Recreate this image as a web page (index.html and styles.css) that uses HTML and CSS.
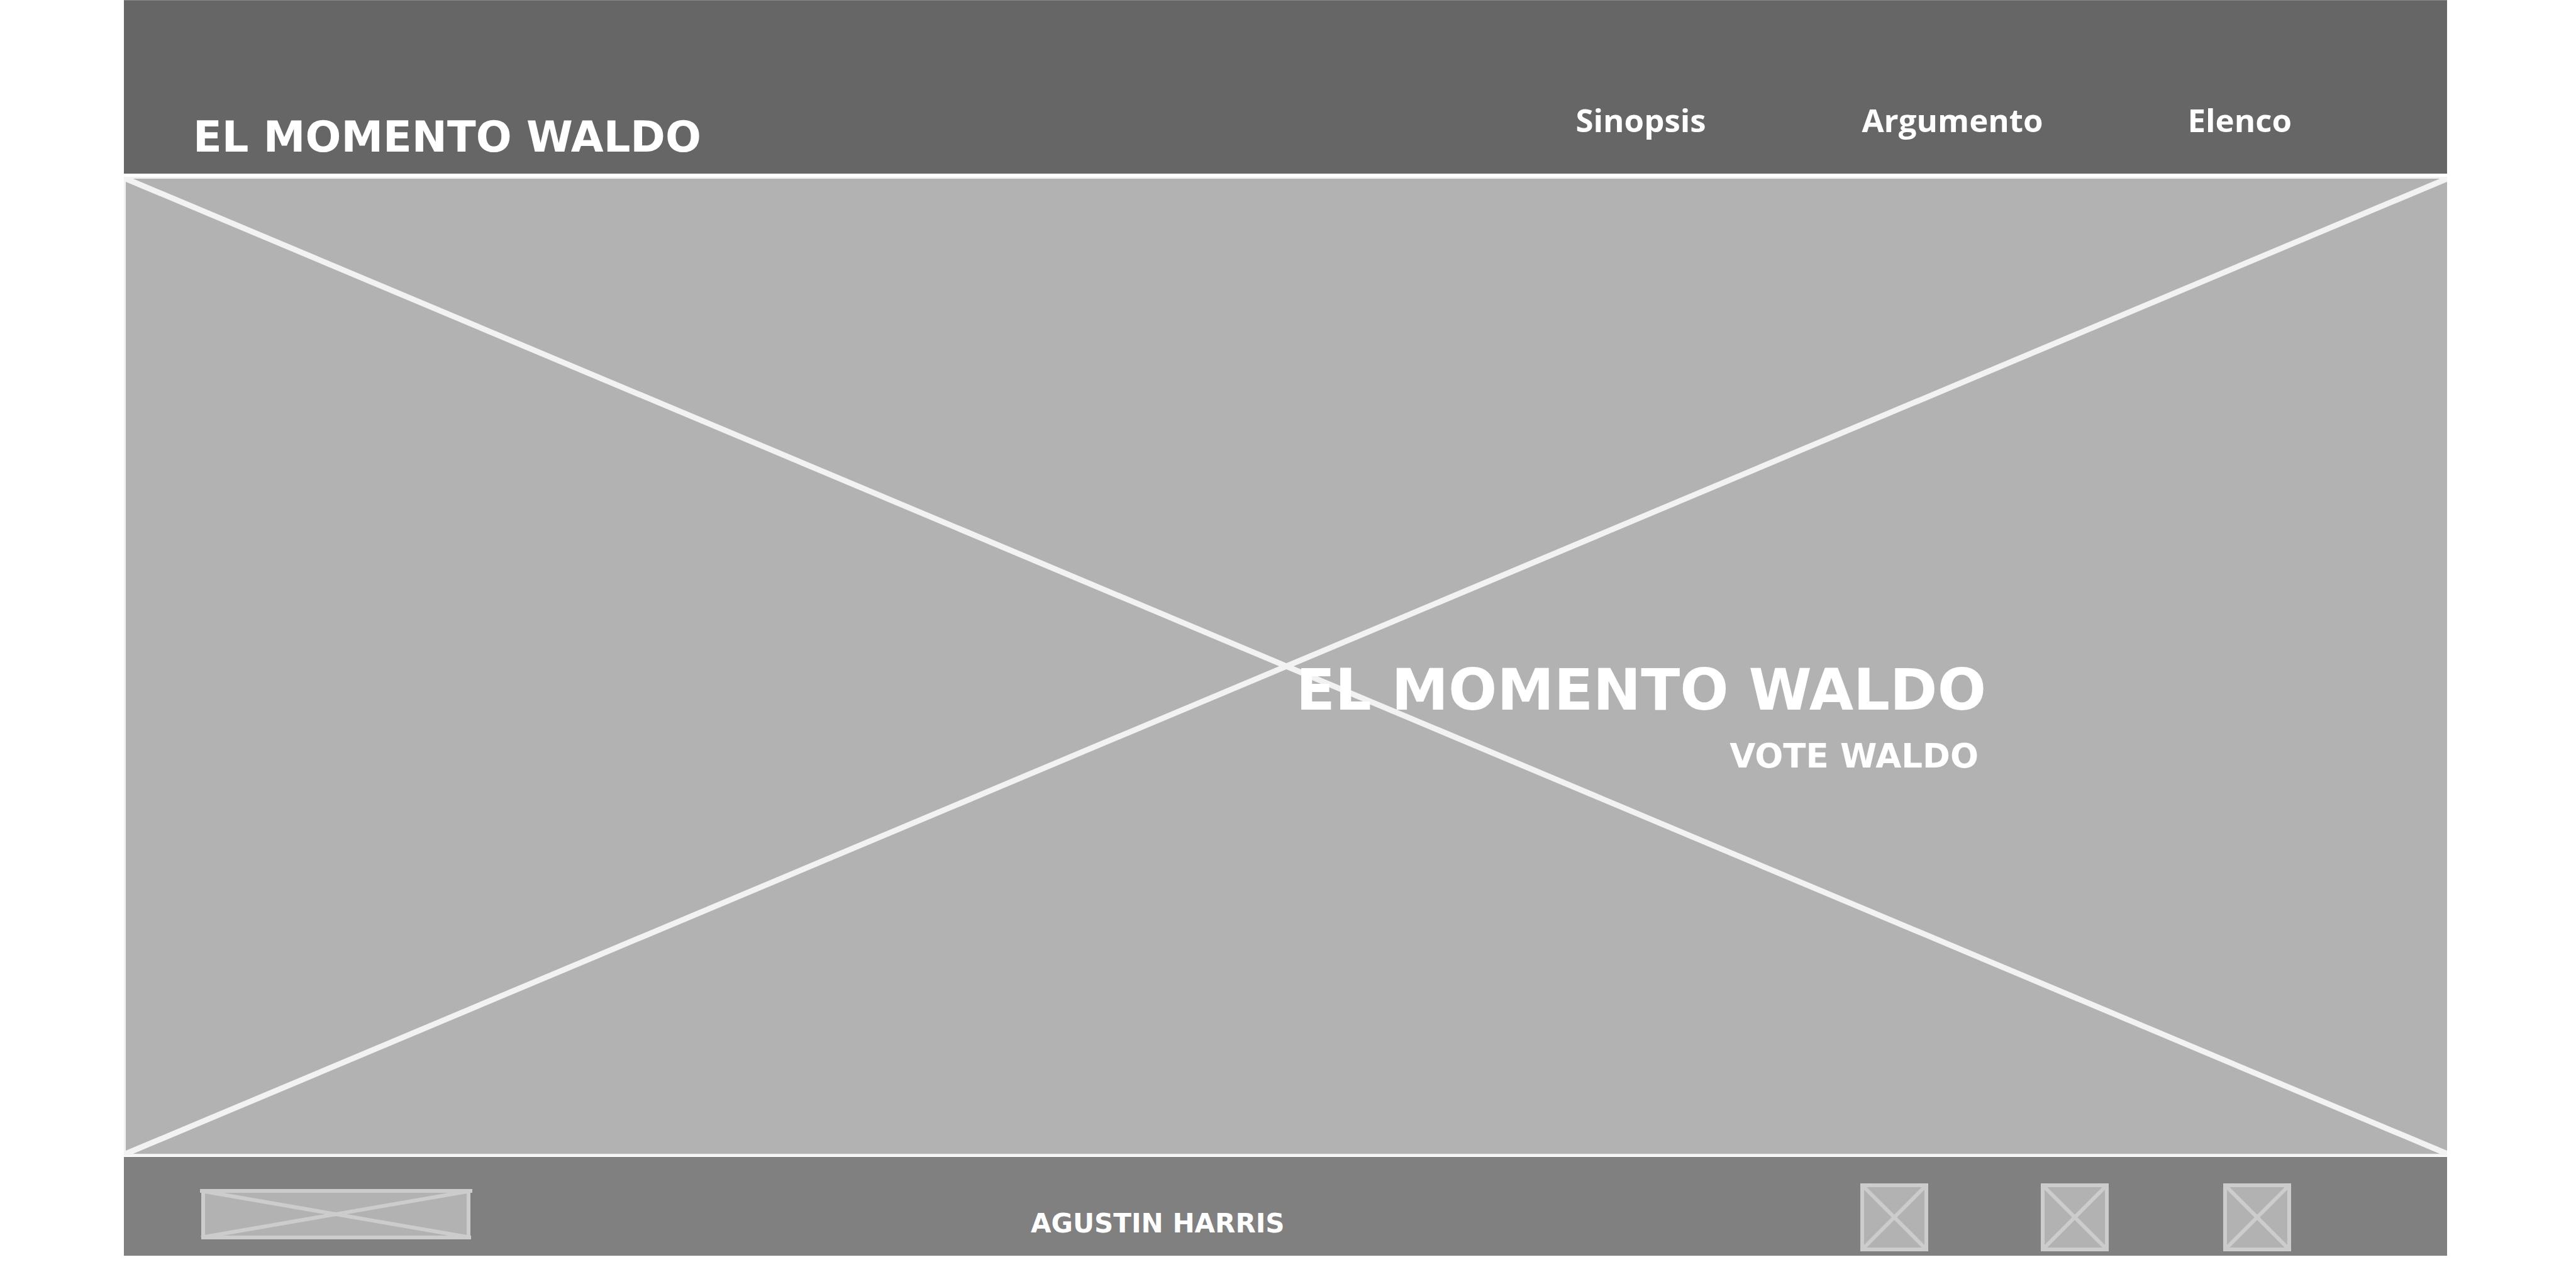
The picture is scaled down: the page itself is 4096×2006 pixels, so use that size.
FILE: index.html
```html
<!DOCTYPE html>
<html lang="es">
<head>
<meta charset="utf-8">
<title>El momento Waldo</title>
<link rel="stylesheet" href="styles.css">
</head>
<body>
<div class="page">
  <header class="header">
    <a class="brand" href="#">EL MOMENTO WALDO</a>
    <nav class="nav">
      <a href="#sinopsis">Sinopsis</a>
      <a href="#argumento">Argumento</a>
      <a href="#elenco">Elenco</a>
    </nav>
  </header>

  <main class="hero">
    <svg class="hero-cross" aria-hidden="true">
      <line x1="0" y1="0" x2="100%" y2="100%"/>
      <line x1="100%" y1="0" x2="0" y2="100%"/>
    </svg>
    <h1 class="hero-title">EL MOMENTO WALDO</h1>
    <p class="hero-tagline">VOTE WALDO</p>
  </main>

  <footer class="footer">
    <svg class="footer-logo" viewBox="0 0 436 80" aria-hidden="true">
      <rect class="fill" x="5" y="1" width="427" height="78"/>
      <path class="frame" d="M7 3V77M429 3V77"/>
      <path class="frame" d="M2 3H435M4 77H433M4 3L432 77M432 3L4 77"/>
    </svg>
    <p class="author">AGUSTIN HARRIS</p>
    <div class="social">
      <a href="#" aria-label="Red social 1"><svg viewBox="0 0 108 108"><rect x="3" y="3" width="102" height="102"/><path d="M3 3L105 105M105 3L3 105"/></svg></a>
      <a href="#" aria-label="Red social 2"><svg viewBox="0 0 108 108"><rect x="3" y="3" width="102" height="102"/><path d="M3 3L105 105M105 3L3 105"/></svg></a>
      <a href="#" aria-label="Red social 3"><svg viewBox="0 0 108 108"><rect x="3" y="3" width="102" height="102"/><path d="M3 3L105 105M105 3L3 105"/></svg></a>
    </div>
  </footer>
</div>
</body>
</html>
```
FILE: styles.css
```css
* {
  box-sizing: border-box;
}

body {
  margin: 0;
  background: #fff;
  color: #fff;
  font-family: "DejaVu Sans", Verdana, sans-serif;
  font-weight: 700;
}

a {
  color: inherit;
  text-decoration: none;
}

h1,
p {
  margin: 0;
}

.page {
  display: flex;
  flex-direction: column;
  min-height: 100vh;
  padding: 0 205px 10px 197px;
}

.header {
  display: flex;
  justify-content: space-between;
  align-items: flex-end;
  padding: 159px 247px 25px 110px;
  border-top: 1px solid #888;
  background: #666;
}

.brand {
  font-size: 67px;
  line-height: 66px;
}

.nav {
  display: grid;
  grid-template-columns: 455px 518px auto;
  margin-bottom: 31px;
  font-family: "Open Sans", "Noto Sans", sans-serif;
  font-size: 51px;
  line-height: 60px;
}

.hero {
  position: relative;
  flex: 1;
  display: flex;
  flex-direction: column;
  align-items: flex-end;
  gap: 30px;
  margin: 5px 0 2px;
  padding: 768px 733px 0 0;
  border: solid #f2f2f2;
  border-width: 3px 0 3px 3px;
  background: #b2b2b2;
}

.hero-cross {
  position: absolute;
  inset: 0;
  width: 100%;
  height: 100%;
  overflow: hidden;
}

.hero-cross line {
  stroke: #f2f2f2;
  stroke-width: 9px;
}

.hero-title,
.hero-tagline {
  position: relative;
}

.hero-title {
  font-size: 91px;
  line-height: 90px;
}

.hero-tagline {
  margin-right: 12px;
  font-size: 53px;
  line-height: 60px;
}

.footer {
  display: flex;
  align-items: flex-start;
  padding: 42px 248px 7px 119px;
  background: #808080;
}

.footer-logo {
  width: 436px;
  height: 80px;
  margin-top: 9px;
}

.footer-logo .fill {
  fill: #b2b2b2;
}

.footer-logo .frame {
  fill: none;
  stroke: #ccc;
  stroke-width: 6px;
}

.author {
  margin: 43px 0 0 887px;
  font-size: 42px;
  line-height: 42px;
}

.social {
  display: grid;
  grid-template-columns: 287px 290px 108px;
  margin-left: auto;
}

.social svg {
  display: block;
  width: 108px;
  height: 108px;
  fill: #b2b2b2;
  stroke: #ccc;
  stroke-width: 6px;
}
```
